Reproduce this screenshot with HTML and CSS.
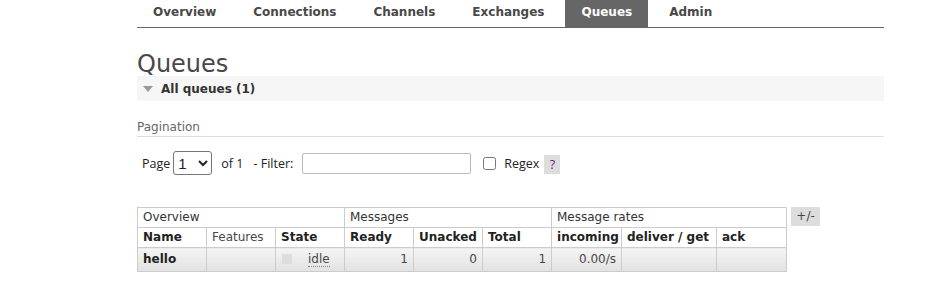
FILE: index.html
```html
<!DOCTYPE html>
<html>

<head>
  <meta charset="utf-8">
  <meta name="viewport" content="width=device-width, initial-scale=1">
  <title>RabbitMQ Management</title>
  <link rel="stylesheet" href="styles.css">
</head>

<body>
	<div class="main">
		<ul class="menu">
			<li><a href="#">Overview</a></li>
			<li><a href="#">Connections</a></li>
			<li><a href="#">Channels</a></li>
			<li><a href="#">Exchanges</a></li>
			<li class="selected"><a href="#">Queues</a></li>
			<li><a href="#">Admin</a></li>
		</ul>

		<h1>Queues</h1>

		<div class="section">
			<h2><span class="arrow"></span>All queues (1)</h2>
		</div>

		<div class="pagination">
			<h3>Pagination</h3>
			<div class="filter">
				<label class="lbl">Page</label>
				<select class="page-select">
					<option>1</option>
				</select>
				<span class="lbl of">of 1</span>
				<span class="lbl">- Filter:</span>
				<input type="text" class="filter-input">
				<input type="checkbox" class="regex-box">
				<span class="lbl">Regex</span>
				<span class="help">?</span>
			</div>
		</div>

		<div class="list">
			<table class="queues">
				<colgroup>
					<col style="width: 69px">
					<col style="width: 69px">
					<col style="width: 69px">
					<col style="width: 69px">
					<col style="width: 69px">
					<col style="width: 69px">
					<col style="width: 70px">
					<col style="width: 95px">
					<col style="width: 70px">
				</colgroup>
				<tr class="group">
					<td colspan="3">Overview</td>
					<td colspan="3">Messages</td>
					<td colspan="3">Message rates</td>
				</tr>
				<tr class="head">
					<th>Name</th>
					<th class="plain">Features</th>
					<th>State</th>
					<th>Ready</th>
					<th>Unacked</th>
					<th>Total</th>
					<th>incoming</th>
					<th>deliver / get</th>
					<th>ack</th>
				</tr>
				<tr class="row">
					<td class="name">hello</td>
					<td></td>
					<td><span class="status"></span><abbr>idle</abbr></td>
					<td class="r">1</td>
					<td class="r">0</td>
					<td class="r">1</td>
					<td class="r">0.00/s</td>
					<td></td>
					<td></td>
				</tr>
			</table>
			<span class="toggle">+/-</span>
		</div>
	</div>
</body>

</html>
```

FILE: styles.css
```css
body {
	margin: 0;
	font-family: "DejaVu Sans", Verdana, sans-serif;
	font-size: 12px;
	color: #484848;
	background: #fff;
}

.main {
	margin-left: 137px;
	width: 747px;
}

.menu {
	display: flex;
	gap: 5px;
	margin: 0;
	padding: 0;
	list-style: none;
	border-bottom: 1px solid #666;
}

.menu li a {
	display: block;
	padding: 5px 16px 8px 16px;
	line-height: 14px;
	font-weight: bold;
	color: #484848;
	text-decoration: none;
}

.menu li.selected a {
	background: #666;
	color: #fff;
}

h1 {
	margin: 25px 0 0 0;
	font-size: 24px;
	line-height: 22px;
	font-weight: normal;
	color: #484848;
}

.section h2 {
	display: flex;
	align-items: center;
	margin: 1px 0 0 0;
	height: 25px;
	padding-left: 6px;
	background: #f6f6f6;
	font-size: 12px;
	color: #333;
}

.arrow {
	width: 0;
	height: 0;
	margin-right: 8px;
	border-left: 5.5px solid transparent;
	border-right: 5.5px solid transparent;
	border-top: 6px solid #999;
}

.pagination h3 {
	margin: 19px 0 0 0;
	padding-bottom: 2px;
	line-height: 14px;
	font-size: 12px;
	font-weight: normal;
	color: #666;
	border-bottom: 1px solid #ddd;
}

.filter {
	display: flex;
	align-items: center;
	margin-top: 14px;
	padding-left: 5px;
	height: 24px;
}

.lbl {
	font-family: "Open Sans", "Liberation Sans", sans-serif;
	font-size: 12.5px;
	color: #222;
}

.page-select {
	width: 39px;
	height: 24px;
	margin: 0 9px 0 3px;
	font-size: 15px;
	border: 1px solid #767676;
	border-radius: 3px;
	background: #fff;
	color: #222;
}

.of {
	margin-right: 10px;
}

.filter-input {
	width: 169px;
	height: 21px;
	box-sizing: border-box;
	margin: 0 12px 0 9px;
	border: 1px solid #bbb;
	border-radius: 2px;
}

.regex-box {
	width: 13px;
	height: 13px;
	margin: 0 8px 0 0;
}

.help {
	display: inline-block;
	margin: 3px 0 0 5px;
	width: 16px;
	height: 19px;
	line-height: 19px;
	text-align: center;
	background: #ddd;
	color: #5a2a76;
	font-family: "Open Sans", "Liberation Sans", sans-serif;
	font-size: 12.5px;
}

.list {
	display: flex;
	align-items: flex-start;
	gap: 4px;
	margin-top: 32px;
}

.queues {
	border-collapse: collapse;
	table-layout: fixed;
	width: 649px;
}

.queues td,
.queues th {
	border: 1px solid #ccc;
	padding: 2px 5px;
	line-height: 15px;
	text-align: left;
	white-space: nowrap;
	font-size: 12px;
}

.queues th {
	font-weight: bold;
	color: #222;
}

.queues th.plain {
	font-weight: normal;
	color: #484848;
}

.group td {
	color: #333;
}

.row td {
	padding-top: 4px;
	padding-bottom: 4px;
	background: linear-gradient(#f4f4f4, #e2e2e2);
}

.row td.name {
	font-weight: bold;
	color: #222;
}

.row td.r {
	text-align: right;
}

.status {
	display: inline-block;
	width: 10px;
	height: 10px;
	margin: 0 16px 0 1px;
	background: #ddd;
	vertical-align: -1px;
}

abbr {
	text-decoration: none;
	border-bottom: 1px dotted #888;
}

.toggle {
	display: inline-block;
	width: 29px;
	height: 19px;
	line-height: 19px;
	text-align: center;
	background: #ddd;
	color: #484848;
}
```
